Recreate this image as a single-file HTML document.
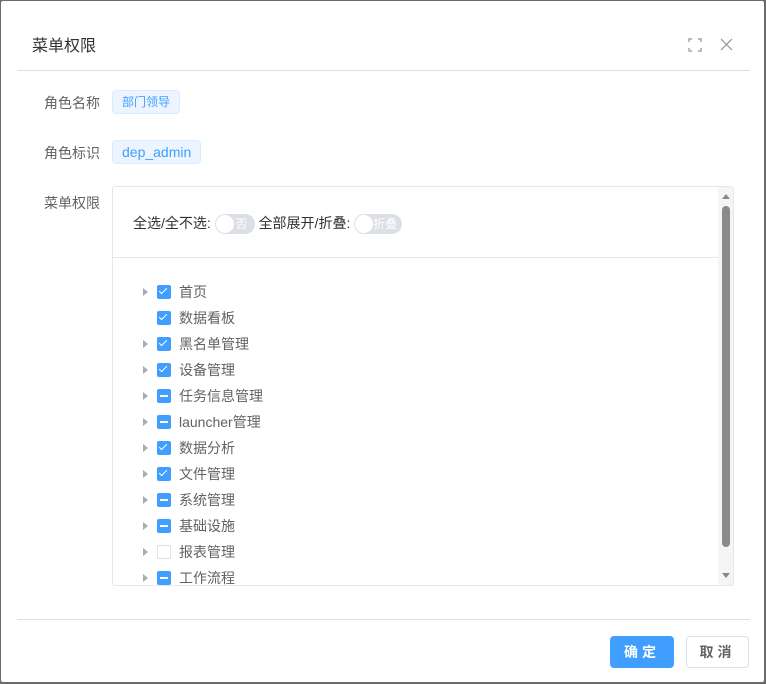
<!DOCTYPE html>
<html><head><meta charset="utf-8"><style>
*{box-sizing:border-box;margin:0;padding:0}
body{width:766px;height:684px;background:#6b6b6b;font-family:"Liberation Sans","Noto Sans CJK SC",sans-serif;position:relative;overflow:hidden}
.dlg{position:absolute;left:1px;top:1px;width:763px;height:681px;background:#fff;border-radius:2px}
.abs{position:absolute;white-space:nowrap}
.title{left:31px;top:31px;font-size:16px;color:#303133}
.line{height:1px;background:#dcdfe6}
.lbl{font-size:14px;color:#606266}
.tag{height:24px;line-height:22px;padding:0 9px;border:1px solid #d9ecff;background:#ecf5ff;color:#409eff;border-radius:4px;font-size:12px}
.box{left:111px;top:185px;width:622px;height:400px;border:1px solid #e4e7ed;border-radius:3px;overflow:hidden}
.sw{display:inline-block;position:relative;height:20px;border-radius:10px;background:#dcdfe6;vertical-align:middle;color:#fff;font-size:12px;line-height:20px}
.sw::before{content:"";position:absolute;left:1px;top:1px;width:18px;height:18px;border-radius:50%;background:#fff}
.row{position:absolute;left:0;width:600px;height:26px;font-size:14px;color:#606266;line-height:26px;white-space:nowrap}
.arr{position:absolute;left:30px;top:9px;width:0;height:0;border-left:5px solid #a8abb2;border-top:4px solid transparent;border-bottom:4px solid transparent}
.cb{position:absolute;left:44px;top:6px;width:14px;height:14px;border-radius:2px;background:#409eff}
.cb.c::after{content:"";position:absolute;left:4px;top:1px;width:3px;height:7px;border:solid #fff;border-width:0 1px 1px 0;transform:rotate(45deg)}
.cb.i::after{content:"";position:absolute;left:3px;top:6px;width:8px;height:2px;background:#fff}
.cb.e{background:#fff;border:1px solid #dcdfe6}
.txt{position:absolute;left:66px;top:0;white-space:nowrap}
.btn{height:32px;border-radius:4px;font-size:14px;line-height:30px;text-align:center;font-weight:bold;letter-spacing:4px}
</style></head><body>
<div class="dlg">
<div class="abs title">菜单权限</div>
<svg class="abs" style="left:687px;top:37px" width="14" height="14" viewBox="0 0 14 14" fill="none" stroke="#909399" stroke-width="1.2"><path d="M1 4V1h3M10 1h3v3M13 10v3h-3M4 13H1v-3"/></svg>
<svg class="abs" style="left:719px;top:37px" width="13" height="13" viewBox="0 0 13 13" stroke="#909399" stroke-width="1.2"><path d="M1 1l11 11M12 1L1 12"/></svg>
<div class="abs line" style="left:16px;top:69px;width:733px"></div>
<div class="abs lbl" style="left:43px;top:92px">角色名称</div>
<div class="abs tag" style="left:111px;top:89px">部门领导</div>
<div class="abs lbl" style="left:43px;top:142px">角色标识</div>
<div class="abs tag" style="left:111px;top:139px;font-size:14px">dep_admin</div>
<div class="abs lbl" style="left:43px;top:192px">菜单权限</div>
<div class="abs box">
 <div class="abs" style="left:20px;top:26px;font-size:14px;color:#303133">全选/全不选: <span class="sw" style="width:40px;padding-left:21px">否</span> 全部展开/折叠: <span class="sw" style="width:48px;padding-left:19px">折叠</span></div>
 <div class="abs line" style="left:0;top:70px;width:605px;background:#e4e7ed"></div>
 <div class="row" style="top:92px"><i class="arr"></i><i class="cb c"></i><span class="txt">首页</span></div>
 <div class="row" style="top:118px"><i class="cb c"></i><span class="txt">数据看板</span></div>
 <div class="row" style="top:144px"><i class="arr"></i><i class="cb c"></i><span class="txt">黑名单管理</span></div>
 <div class="row" style="top:170px"><i class="arr"></i><i class="cb c"></i><span class="txt">设备管理</span></div>
 <div class="row" style="top:196px"><i class="arr"></i><i class="cb i"></i><span class="txt">任务信息管理</span></div>
 <div class="row" style="top:222px"><i class="arr"></i><i class="cb i"></i><span class="txt">launcher管理</span></div>
 <div class="row" style="top:248px"><i class="arr"></i><i class="cb c"></i><span class="txt">数据分析</span></div>
 <div class="row" style="top:274px"><i class="arr"></i><i class="cb c"></i><span class="txt">文件管理</span></div>
 <div class="row" style="top:300px"><i class="arr"></i><i class="cb i"></i><span class="txt">系统管理</span></div>
 <div class="row" style="top:326px"><i class="arr"></i><i class="cb i"></i><span class="txt">基础设施</span></div>
 <div class="row" style="top:352px"><i class="arr"></i><i class="cb e"></i><span class="txt">报表管理</span></div>
 <div class="row" style="top:378px"><i class="arr"></i><i class="cb i"></i><span class="txt">工作流程</span></div>
 <div class="abs" style="left:605px;top:0;width:16px;height:398px;background:#f5f5f5"></div>
 <div class="abs" style="left:609px;top:7px;border-bottom:5px solid #888;border-left:4px solid transparent;border-right:4px solid transparent"></div>
 <div class="abs" style="left:609px;top:19px;width:8px;height:341px;border-radius:4px;background:#8a8a8a"></div>
 <div class="abs" style="left:609px;top:386px;border-top:5px solid #888;border-left:4px solid transparent;border-right:4px solid transparent"></div>
</div>
<div class="abs line" style="left:16px;top:618px;width:733px"></div>
<div class="abs btn" style="left:609px;top:635px;width:64px;background:#409eff;color:#fff;border:1px solid #409eff">确定</div>
<div class="abs btn" style="left:685px;top:635px;width:63px;background:#fff;color:#606266;border:1px solid #dcdfe6">取消</div>
</div>
</body></html>
